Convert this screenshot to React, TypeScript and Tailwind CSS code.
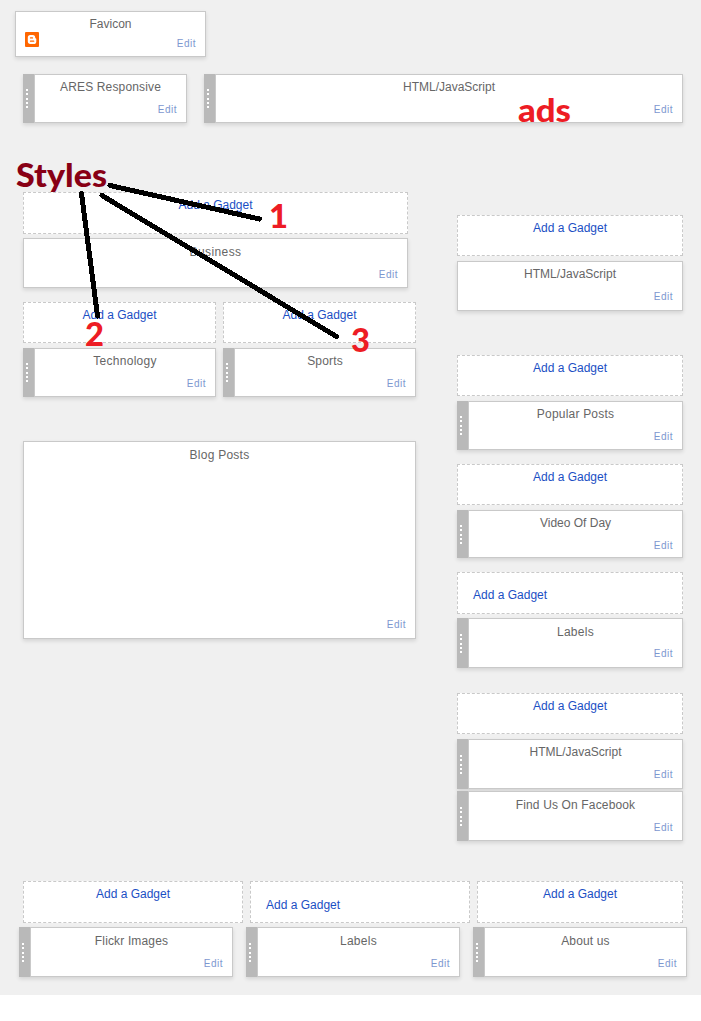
import React from "react";
import clsx from "clsx";

type GadgetProps = {
  title: string;
  className: string;
  handle?: boolean;
  low?: boolean;
  edit?: "high" | "normal" | "low";
  spacing?: string;
  children?: React.ReactNode;
};

const dots = [0, 4, 9, 13, 17];

const editPadding = { high: "pb-[7px]", normal: "pb-[6px]", low: "pb-[5px]" };

function Handle() {
  return (
    <div className="flex w-[11px] shrink-0 items-center bg-[#b9b9b9] pl-[3px]">
      <svg width="2" height="19" viewBox="0 0 2 19" shapeRendering="crispEdges">
        {dots.map((y) => (
          <rect key={y} x="0" y={y} width="2" height="2" fill="#fff" />
        ))}
      </svg>
    </div>
  );
}

function Gadget({
  title,
  className,
  handle = false,
  low = false,
  edit = "normal",
  spacing = "tracking-[0.15px]",
  children,
}: GadgetProps) {
  return (
    <section className={clsx("flex shrink-0 shadow-[0_2px_4px_rgba(0,0,0,0.12)]", className)}>
      {handle && <Handle />}
      <div
        className={clsx(
          "flex grow flex-col justify-between border border-[#c9c9c9] bg-white",
          editPadding[edit],
          low ? "pt-[6px]" : "pt-[5px]",
        )}
      >
        <h2 className={clsx("text-center text-[12px] leading-[14px] text-[#666]", spacing)}>{title}</h2>
        <div className="flex items-end justify-between pr-[9px] pl-[9px]">
          <span className="flex">{children}</span>
          <a className="text-[10px] leading-[12px] tracking-[0.5px] text-[#7d97cf]">Edit</a>
        </div>
      </div>
    </section>
  );
}

function AddGadget({ className, align = "center" }: { className: string; align?: "center" | "left" }) {
  return (
    <div
      className={clsx(
        "shrink-0 border border-dashed border-[#c9c9c9] bg-white text-[12px] leading-[14px] text-[#1b4fc4]",
        align === "center" ? "pt-[5px] text-center" : "pl-[15px]",
        className,
      )}
    >
      <a>Add a Gadget</a>
    </div>
  );
}

function BloggerIcon() {
  return (
    <svg width="14" height="15" viewBox="0 0 14 15" className="mb-[3px]">
      <rect width="14" height="15" rx="1" fill="#ff6600" />
      <path
        d="M5.200 3h2.600C9.400 3 10.200 4 10.200 5.300c0 .8.200 1.100.7 1.200.3.1.4.3.4.6v2.300c0 1.700-1.100 2.700-2.600 2.700H5.300c-1.500 0-2.500-1-2.500-2.500V5.400C2.800 3.900 3.700 3 5.200 3Z"
        fill="#fff"
      />
      <path d="M5.500 5.900h2M5.500 9.200h3.200" stroke="#ff6600" strokeWidth="1.300" strokeLinecap="round" />
    </svg>
  );
}

function Annotations() {
  return (
    <svg
      className="pointer-events-none absolute top-0 left-0 font-['Lato',sans-serif]"
      width="701"
      height="400"
      viewBox="0 0 701 400"
    >
      <g stroke="#000" strokeWidth="5" strokeLinecap="round" shapeRendering="crispEdges">
        <path d="M110 185.500 259.500 219" />
        <path d="M81.500 193.500 97.500 316" />
        <path d="M102 195.500 336.500 336.500" />
      </g>
      <text
        className="font-black"
        x="16"
        y="187"
        fontSize="32"
        fill="#880015"
        textLength="91"
        lengthAdjust="spacingAndGlyphs"
      >
        Styles
      </text>
      <g className="font-black" fill="#ed1c24" fontSize="32">
        <text x="518" y="122" textLength="53" lengthAdjust="spacingAndGlyphs">ads</text>
        <text x="269" y="228" textLength="19" lengthAdjust="spacingAndGlyphs">1</text>
        <text x="85" y="346" textLength="19" lengthAdjust="spacingAndGlyphs">2</text>
        <text x="351" y="352" textLength="19" lengthAdjust="spacingAndGlyphs">3</text>
      </g>
    </svg>
  );
}

export default function App() {
  return (
    <div className="h-[1021px] w-[701px] overflow-hidden bg-white font-['Liberation_Sans',Arial,sans-serif]">
      <main className="relative h-[995px] bg-[#f0f0f0] pt-[11px]">
        <Gadget title="Favicon" spacing="tracking-normal" className="ml-[15px] h-[46px] w-[191px]">
          <BloggerIcon />
        </Gadget>

        <div className="mt-[17px] ml-[23px] flex gap-[17px]">
          <Gadget title="ARES Responsive" handle className="h-[49px] w-[164px]" />
          <Gadget title="HTML/JavaScript" spacing="tracking-normal" handle className="h-[49px] w-[479px]" />
        </div>

        <div className="ml-[23px] flex h-[758px] gap-[41px]">
          <div className="w-[393px] pt-[69px]">
            <AddGadget className="h-[42px] w-[385px]" />
            <Gadget title="Business" spacing="tracking-[0.4px]" low className="mt-1 h-[50px] w-[385px]" />
            <div className="mt-[14px] flex gap-[7px]">
              <div>
                <AddGadget className="h-[41px] w-[193px]" />
                <Gadget
                  title="Technology"
                  spacing="tracking-[0.3px]"
                  handle
                  className="mt-[5px] h-[49px] w-[193px]"
                />
              </div>
              <div>
                <AddGadget className="h-[41px] w-[193px]" />
                <Gadget title="Sports" handle className="mt-[5px] h-[49px] w-[193px]" />
              </div>
            </div>
            <Gadget
              title="Blog Posts"
              spacing="tracking-[0.25px]"
              low
              edit="high"
              className="mt-[44px] h-[198px]"
            />
          </div>

          <aside className="w-[226px] pt-[92px]">
            <AddGadget className="h-[41px]" />
            <Gadget
              title="HTML/JavaScript"
              spacing="tracking-normal"
              edit="high"
              className="mt-[5px] h-[50px]"
            />
            <AddGadget className="mt-[44px] h-[41px]" />
            <Gadget title="Popular Posts" spacing="tracking-[0.2px]" handle className="mt-[5px] h-[49px]" />
            <AddGadget className="mt-[14px] h-[41px]" />
            <Gadget title="Video Of Day" spacing="tracking-normal" handle edit="low" className="mt-[5px] h-[48px]" />
            <AddGadget align="left" className="mt-[14px] h-[42px] pt-[15px]" />
            <Gadget title="Labels" spacing="tracking-[0.3px]" handle low edit="high" className="mt-1 h-[50px]" />
            <AddGadget className="mt-[25px] h-[41px]" />
            <Gadget
              title="HTML/JavaScript"
              spacing="tracking-normal"
              handle
              edit="high"
              className="mt-[5px] h-[50px]"
            />
            <Gadget title="Find Us On Facebook" handle low className="mt-[2px] h-[50px]" />
          </aside>
        </div>

        <div className="ml-[23px] flex gap-[7px]">
          <AddGadget className="h-[42px] w-[220px]" />
          <AddGadget align="left" className="h-[42px] w-[220px] pt-[16px]" />
          <AddGadget className="h-[42px] w-[206px]" />
        </div>
        <div className="mt-1 ml-[19px] flex gap-[13px]">
          <Gadget title="Flickr Images" handle low className="h-[50px] w-[214px]" />
          <Gadget title="Labels" spacing="tracking-[0.3px]" handle low className="h-[50px] w-[214px]" />
          <Gadget title="About us" handle low className="h-[50px] w-[214px]" />
        </div>

        <Annotations />
      </main>
    </div>
  );
}
